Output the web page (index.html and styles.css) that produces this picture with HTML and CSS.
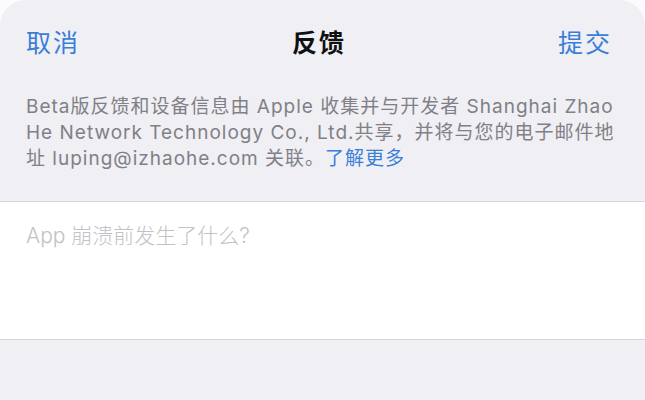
FILE: index.html
```html
<!DOCTYPE html>
<html lang="zh-CN">
<head>
  <meta charset="UTF-8">
  <meta name="viewport" content="width=device-width, initial-scale=1.0">
  <title>反馈</title>
  <link rel="stylesheet" href="styles.css">
</head>
<body>
  <div class="sheet">
    <!-- Nav bar -->
    <div class="navbar">
      <span class="nav-btn">取消</span>
      <span class="nav-title">反馈</span>
      <span class="nav-btn">提交</span>
    </div>

    <p class="notice">Beta版反馈和设备信息由 Apple 收集并与开发者 Shanghai Zhao He Network Technology Co., Ltd.共享，并将与您的电子邮件地址 luping@izhaohe.com 关联。<span class="link">了解更多</span></p>

    <div class="field">
      <div class="placeholder">App 崩溃前发生了什么?</div>
    </div>
  </div>
</body>
</html>
```

FILE: styles.css
```css
body {
  margin: 0;
  background: #fbfbfd;
  font-family: Inter, "Noto Sans CJK SC", sans-serif;
}
.sheet {
  background: #efeff4;
  border-radius: 26px 26px 0 0;
  height: 400px;
  overflow: hidden;
}
.navbar {
  display: flex;
  justify-content: space-between;
  align-items: center;
  height: 82px;
  padding: 0 33px 0 26px;
  font-size: 25px;
  letter-spacing: 2px;
}
.nav-btn {
  color: #3a7ed8;
}
.nav-title {
  color: #111;
  font-weight: 700;
}
.notice {
  margin: 12px 0 0;
  padding: 0 26px;
  font-size: 19px;
  line-height: 26px;
  letter-spacing: 1px;
  color: #808086;
}
.link {
  color: #3a7ed8;
}
.field {
  margin-top: 29px;
  height: 137px;
  background: #fff;
  border-top: 1px solid #d6d6da;
  border-bottom: 1px solid #d6d6da;
}
.placeholder {
  padding: 17px 26px 0;
  font-size: 21px;
  font-weight: 300;
  color: #c2c2c6;
}
```
